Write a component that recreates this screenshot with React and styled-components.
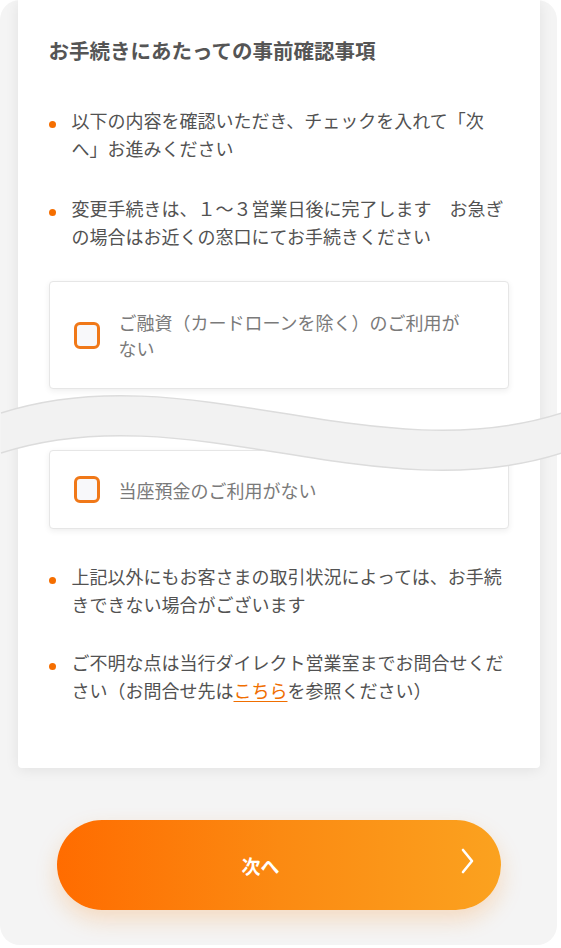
import styled, { createGlobalStyle } from 'styled-components';

const Global = createGlobalStyle`
  html, body {
    margin: 0;
    padding: 0;
    background: #ffffff;
  }
  body {
    font-family: "Noto Sans CJK JP", "Noto Sans", sans-serif;
  }
  * { box-sizing: border-box; }
`;

const Frame = styled.div`
  width: 557px;
  height: 945px;
  background: #f4f4f4;
  border-radius: 20px;
  display: flex;
  flex-direction: column;
  align-items: center;
`;

const Sheet = styled.section`
  width: 522px;
  background: #ffffff;
  border-radius: 0 0 4px 4px;
  box-shadow: 0 2px 14px rgba(0, 0, 0, 0.08);
  padding: 36px 31px 64px;
  display: flex;
  flex-direction: column;
`;

const Title = styled.h2`
  margin: 0;
  font-size: 20.5px;
  line-height: 28px;
  font-weight: 700;
  color: #555555;
`;

const Notes = styled.ul`
  list-style: none;
  margin: ${p => p.$top}px 0 0;
  padding: 0;
  display: flex;
  flex-direction: column;
  gap: ${p => p.$gap}px;
`;

const Note = styled.li`
  position: relative;
  padding-left: 23px;
  font-size: 18px;
  line-height: 28px;
  color: #525252;
  white-space: nowrap;

  &::before {
    content: "";
    position: absolute;
    left: 0;
    top: 15px;
    width: 7px;
    height: 7px;
    border-radius: 50%;
    background: #f56e00;
  }
`;

const Link = styled.a`
  color: #f06e00;
  text-decoration: underline;
  text-underline-offset: 3px;
`;

const CheckCard = styled.label`
  display: flex;
  align-items: center;
  gap: 19px;
  margin-top: ${p => p.$top || 0}px;
  padding: ${p => p.$pad}px 24px;
  background: #ffffff;
  border: 1px solid #e6e6e6;
  border-radius: 4px;
  box-shadow: 0 2px 6px rgba(0, 0, 0, 0.07);
`;

const Box = styled.span`
  flex: none;
  width: 26px;
  height: 27px;
  border: 3px solid #f07818;
  border-radius: 6px;
  background: #f8f8fa;
`;

const Label = styled.span`
  font-size: 18px;
  line-height: 26px;
  color: #7a7a7a;
  white-space: nowrap;
`;

const Tear = styled.div`
  position: relative;
  height: 61px;
  z-index: 2;

  svg {
    position: absolute;
    left: -48px;
    top: 0;
    overflow: visible;
  }
`;

const NextButton = styled.button`
  margin-top: 52px;
  width: 444px;
  height: 90px;
  border: none;
  border-radius: 45px;
  background: linear-gradient(90deg, #ff6c00 0%, #fb8a12 50%, #fba21f 100%);
  box-shadow: 0 10px 22px rgba(250, 130, 20, 0.22);
  display: grid;
  grid-template-columns: 1fr 13px;
  align-items: center;
  padding: 0 27px 0 4px;
  color: #ffffff;
  font-family: "Noto Sans CJK JP", "Noto Sans", sans-serif;
  font-size: 19px;
  font-weight: 700;
  cursor: pointer;

  span { text-align: center; }
  svg { margin-bottom: 9px; }
`;

function Wave() {
  return (
    <svg width="561" height="90" viewBox="0 0 561 90">
      <path
        d="M0,24 C187,-36 374,84 561,24 L561,64 C374,124 187,4 0,64 Z"
        fill="#f2f2f2"
      />
      <path d="M0,24 C187,-36 374,84 561,24" fill="none" stroke="#dcdcdc" strokeWidth="1.5" />
      <path d="M0,64 C187,4 374,124 561,64" fill="none" stroke="#dcdcdc" strokeWidth="1.5" />
    </svg>
  );
}

export default function App() {
  return (
    <>
      <Global />
      <Frame>
        <Sheet>
          <Title>お手続きにあたっての事前確認事項</Title>

          <Notes $top={42} $gap={32}>
            <Note>以下の内容を確認いただき、チェックを入れて「次<br />へ」お進みください</Note>
            <Note>変更手続きは、１～３営業日後に完了します　お急ぎ<br />の場合はお近くの窓口にてお手続きください</Note>
          </Notes>

          <CheckCard $top={31} $pad={27}>
            <Box />
            <Label>ご融資（カードローンを除く）のご利用が<br />ない</Label>
          </CheckCard>

          <Tear>
            <Wave />
          </Tear>

          <CheckCard $pad={25}>
            <Box />
            <Label>当座預金のご利用がない</Label>
          </CheckCard>

          <Notes $top={33} $gap={30}>
            <Note>上記以外にもお客さまの取引状況によっては、お手続<br />きできない場合がございます</Note>
            <Note>ご不明な点は当行ダイレクト営業室までお問合せくだ<br />さい（お問合せ先は<Link href="#">こちら</Link>を参照ください）</Note>
          </Notes>
        </Sheet>

        <NextButton type="button">
          <span>次へ</span>
          <svg width="13" height="26" viewBox="0 0 13 26">
            <polyline points="2,2 11,13 2,24" fill="none" stroke="#ffffff" strokeWidth="2.6" strokeLinecap="round" strokeLinejoin="round" />
          </svg>
        </NextButton>
      </Frame>
    </>
  );
}
